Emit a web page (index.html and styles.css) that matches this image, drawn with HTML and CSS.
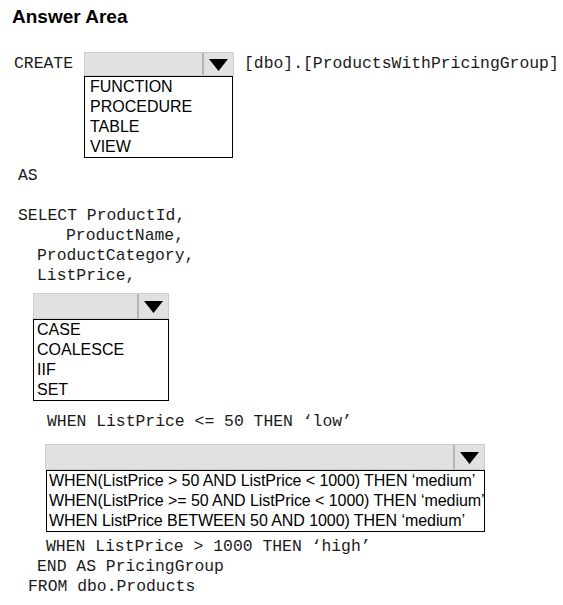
FILE: index.html
```html
<!DOCTYPE html>
<html>
<head>
<meta charset="utf-8">
<link rel="stylesheet" href="styles.css">
</head>
<body>
<div class="page">
  <h1 class="title">Answer Area</h1>

  <div class="create-row">
    <span class="code create-kw">CREATE</span>
    <div class="dropdown dd-create">
      <div class="dd-head">
        <div class="dd-field"></div>
        <div class="dd-arrow"><svg width="19" height="12" viewBox="0 0 19 12"><polygon points="0,0 19,0 9.5,12" fill="#000"/></svg></div>
      </div>
      <ul class="dd-list">
        <li>FUNCTION</li>
        <li>PROCEDURE</li>
        <li>TABLE</li>
        <li>VIEW</li>
      </ul>
    </div>
    <span class="code name">[dbo].[ProductsWithPricingGroup]</span>
  </div>

  <div class="code-block">
    <div class="code line">AS</div>
    <div class="code line"></div>
    <div class="code line">SELECT ProductId,</div>
    <div class="code line ind5">ProductName,</div>
    <div class="code line ind2">ProductCategory,</div>
    <div class="code line ind2">ListPrice,</div>
  </div>

  <div class="dropdown dd-func">
    <div class="dd-head">
      <div class="dd-field"></div>
      <div class="dd-arrow"><svg width="19" height="12" viewBox="0 0 19 12"><polygon points="0,0 19,0 9.5,12" fill="#000"/></svg></div>
    </div>
    <ul class="dd-list">
      <li>CASE</li>
      <li>COALESCE</li>
      <li>IIF</li>
      <li>SET</li>
    </ul>
  </div>

  <div class="code line when-low">WHEN ListPrice &lt;= 50 THEN ‘low’</div>

  <div class="dropdown dd-when">
    <div class="dd-head">
      <div class="dd-field"></div>
      <div class="dd-arrow"><svg width="19" height="12" viewBox="0 0 19 12"><polygon points="0,0 19,0 9.5,12" fill="#000"/></svg></div>
    </div>
    <ul class="dd-list">
      <li>WHEN(ListPrice &gt; 50 AND ListPrice &lt; 1000) THEN ‘medium’</li>
      <li>WHEN(ListPrice &gt;= 50 AND ListPrice &lt; 1000) THEN ‘medium’</li>
      <li>WHEN ListPrice BETWEEN 50 AND 1000) THEN ‘medium’</li>
    </ul>
  </div>

  <div class="code-block tail">
    <div class="code line ind3b">WHEN ListPrice &gt; 1000 THEN ‘high’</div>
    <div class="code line ind2">END AS PricingGroup</div>
    <div class="code line ind1">FROM dbo.Products</div>
  </div>
</div>
</body>
</html>
```

FILE: styles.css
```css
html, body {
  margin: 0;
  padding: 0;
  background: #fff;
}

.page {
  width: 563px;
  height: 605px;
  box-sizing: border-box;
  padding: 5px 0 0 0;
  font-family: "Liberation Sans", Arial, sans-serif;
  color: #000;
}

.title {
  margin: 0 0 0 12px;
  font-family: "Liberation Sans", Arial, sans-serif;
  font-weight: bold;
  font-size: 19px;
  line-height: 24px;
  color: #000;
}

.code {
  font-family: "Liberation Mono", "Courier New", monospace;
  font-size: 16.4px;
  line-height: 20px;
  color: #1a1a1a;
  white-space: pre;
}

.line {
  height: 20px;
}

.create-row {
  display: flex;
  align-items: flex-start;
  margin-top: 23px;
  padding-left: 14px;
}

.create-kw {
  padding-top: 2px;
  width: 70px;
}

.name {
  margin-left: 10px;
  padding-top: 2px;
}

.dropdown {
  display: flex;
  flex-direction: column;
}

.dd-head {
  display: flex;
  height: 24px;
  box-sizing: border-box;
  border: 1px solid #cdcdcd;
  background: #e1e1e1;
}

.dd-field {
  flex: 1;
}

.dd-arrow {
  width: 31px;
  border-left: 2px solid #b4b4b4;
  display: flex;
  align-items: center;
  justify-content: center;
  padding-top: 1px;
  box-sizing: border-box;
}

.dd-arrow svg {
  display: block;
}

.dd-list {
  list-style: none;
  margin: 0;
  padding: 0;
  border: 1px solid #000;
  font-family: "Liberation Sans", Arial, sans-serif;
  font-size: 16px;
  line-height: 20px;
  color: #000;
}

.dd-list li {
  height: 20px;
  white-space: nowrap;
}

.dd-create {
  width: 150px;
}

.dd-create .dd-list {
  width: 149px;
  box-sizing: border-box;
}

.dd-create .dd-list li {
  padding-left: 5px;
}

.code-block {
  padding-left: 18px;
  margin-top: 8px;
}

.ind1 { padding-left: 10px; }
.ind2 { padding-left: 19px; }
.ind3b { padding-left: 28px; }
.ind5 { padding-left: 48px; }

.dd-func {
  width: 136px;
  margin: 7px 0 0 33px;
}

.dd-func .dd-head {
  height: 26px;
}

.dd-func .dd-list li {
  padding-left: 3px;
}

.when-low {
  margin-top: 11px;
  padding-left: 47px;
}

.dd-when {
  width: 440px;
  margin: 12px 0 0 45px;
}

.dd-when .dd-head {
  height: 26px;
}

.dd-when .dd-list {
  margin-left: 1px;
}

.dd-when .dd-list li {
  padding-left: 2px;
  letter-spacing: -0.07px;
}

.tail {
  margin-top: 5px;
}
```
